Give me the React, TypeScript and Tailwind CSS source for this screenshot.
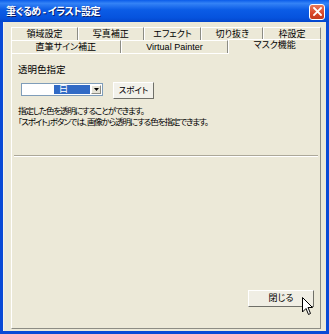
import React from 'react';

const rowOne = [
  { label: '領域設定', w: 'w-[67px]' },
  { label: '写真補正', w: 'w-[66px]' },
  { label: 'エフェクト', w: 'w-[58px]' },
  { label: '切り抜き', w: 'w-[62px]' },
  { label: '枠設定', w: 'w-[58px]' },
];

const rowTwo = [
  { label: '直筆サイン補正', w: 'w-[110px]', active: false },
  { label: 'Virtual Painter', w: 'w-[108px]', active: false },
  { label: 'マスク機能', w: 'w-[93px]', active: true },
];

const Cursor = () => (
  <svg width="12" height="19" viewBox="0 0 12 19" className="absolute left-[302px] top-[297px]">
    <path d="M0.5 0.5 L0.5 15 L4 11.5 L6.5 17.5 L8.5 16.5 L6 10.5 L10.5 10.5 Z" fill="#fff" stroke="#000" strokeWidth="1" strokeLinejoin="round" />
  </svg>
);

export default function App() {
  return (
    <div className="relative w-[329px] h-[334px] flex flex-col bg-[#0A4AD6] overflow-hidden font-['Liberation_Sans','Noto_Sans_CJK_JP',sans-serif] [font-feature-settings:'palt'] text-black">
      {/* title bar */}
      <div className="h-[22px] flex items-center justify-between pl-[6px] pr-[4px] pt-[1px] bg-[linear-gradient(180deg,#0A5CEA_0%,#3483F6_15%,#0B5CE6_45%,#0653DE_80%,#0446CC_100%)]">
        <span className="text-[10px] font-bold text-white tracking-[-0.6px] [text-shadow:1px_1px_0_#0A1E6A]">筆ぐるめ - イラスト設定</span>
        <div className="w-[16px] h-[16px] rounded-[3px] border border-white bg-[linear-gradient(180deg,#E8795A_0%,#D9472A_60%,#C23A1E_100%)] flex items-center justify-center">
          <svg width="9" height="9" viewBox="0 0 9 9">
            <path d="M1 1 L8 8 M8 1 L1 8" stroke="#fff" strokeWidth="1.8" strokeLinecap="square" />
          </svg>
        </div>
      </div>

      {/* client area */}
      <div className="flex-1 mx-[3px] mb-[3px] bg-[#ECE9D8] flex flex-col pt-[5px] pl-[7px] pr-[5px] pb-[2px] border-l border-[#F4F3EC]">
        {/* back tab row */}
        <div className="flex h-[13px]">
          {rowOne.map(t => (
            <div key={t.label} className={`${t.w} border-t border-l border-white border-r border-r-[#8C8C84] flex items-center justify-center text-[9px] leading-none`}>
              {t.label}
            </div>
          ))}
        </div>

        {/* front tab row */}
        <div className="flex h-[13px] items-end">
          {rowTwo.map(t => (
            <div
              key={t.label}
              className={
                t.active
                  ? `${t.w} relative z-10 h-[15px] -mb-[1px] bg-[#ECE9D8] border-t border-l border-white border-r border-r-[#8C8C84] flex items-start pt-[1px] justify-center text-[9px] leading-none`
                  : `${t.w} h-[13px] border-t border-l border-white border-r border-r-[#8C8C84] flex items-center justify-center text-[9px] leading-none`
              }
            >
              {t.label}
            </div>
          ))}
        </div>

        {/* panel */}
        <div className="flex-1 flex flex-col border-t border-l border-white border-r border-b border-r-[#8C8C84] border-b-[#8C8C84] pl-[6px] pr-[6px] pt-[10px] pb-[21px]">
          <div className="text-[9.5px] leading-[12px]">透明色指定</div>

          <div className="flex items-start mt-[6px] ml-[3px] gap-[10px]">
            <div className="mt-[1px] w-[82px] h-[13px] flex border border-[#7F9DB9] bg-white p-[1px]">
              <div className="w-[31px] h-full bg-white" />
              <div className="flex-1 h-full bg-[#316AC5] text-white text-[9px] leading-[9px] pl-[5px] flex items-center">白</div>
              <div className="w-[10px] h-full ml-[1px] bg-[#E6E3D6] border-r border-b border-[#8C8C84] border-t border-l border-t-white border-l-white flex items-center justify-center">
                <svg width="5" height="3" viewBox="0 0 5 3">
                  <path d="M0 0 L5 0 L2.5 3 Z" fill="#000" />
                </svg>
              </div>
            </div>
            <div className="w-[41px] h-[17px] flex items-center justify-center text-[8.5px] leading-none bg-[#F2F1EA] border-t border-l border-white border-r border-b border-r-[#6F6F68] border-b-[#6F6F68]">
              スポイト
            </div>
          </div>

          <div className="mt-[7px] text-[8.5px] leading-[11px] tracking-[-1.1px]">
            <div>指定した色を透明にすることができます。</div>
            <div>「スポイト」ボタンでは、画像から透明にする色を指定できます。</div>
          </div>

          <div className="mt-[27px] -mx-[4px] h-[2px] border-t border-[#ACA899] border-b border-b-white" />

          <div className="mt-auto flex justify-end">
            <div className="w-[66px] h-[17px] flex items-center justify-center text-[9px] leading-none bg-[#F0EEE4] border-t border-l border-white border-r border-b border-r-[#6F6F68] border-b-[#6F6F68]">
              閉じる
            </div>
          </div>
        </div>
      </div>

      <Cursor />
    </div>
  );
}
